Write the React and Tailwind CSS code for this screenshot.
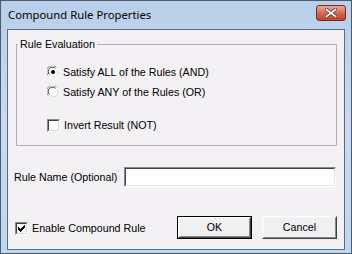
import React from "react";

function Radio({ checked }) {
  return (
    <svg width="12" height="12" viewBox="0 0 12 12" className="shrink-0">
      <circle cx="6" cy="6" r="5.5" fill="#ffffff" />
      <path d="M1.2 9.4 A5.5 5.5 0 0 1 9.4 1.2" stroke="#8a8a8a" strokeWidth="1" fill="none" />
      <path d="M2.4 8.4 A4.2 4.2 0 0 1 8.4 2.4" stroke="#404040" strokeWidth="1" fill="none" />
      <path d="M10.8 2.6 A5.5 5.5 0 0 1 2.6 10.8" stroke="#ffffff" strokeWidth="1" fill="none" />
      <path d="M9.6 3.6 A4.2 4.2 0 0 1 3.6 9.6" stroke="#d8d6d8" strokeWidth="1" fill="none" />
      {checked && <circle cx="6" cy="6" r="2" fill="#000000" />}
    </svg>
  );
}

function Check({ checked }) {
  return (
    <div className="w-[13px] h-[13px] shrink-0 border border-t-[#8a8a8a] border-l-[#8a8a8a] border-b-white border-r-white">
      <div className="w-full h-full bg-white border border-t-[#404040] border-l-[#404040] border-b-[#d8d6d8] border-r-[#d8d6d8] flex items-center justify-center">
        {checked && (
          <svg width="7" height="7" viewBox="0 0 7 7">
            <path d="M0 2h1v1h1v1h1v-1h1v-1h1v-1h1v-1h1v3h-1v1h-1v1h-1v1h-1v1h-1v-1h-1v-1h-1z" fill="#000" />
          </svg>
        )}
      </div>
    </div>
  );
}

function Button({ children, isDefault }) {
  return (
    <div className={"w-[75px] h-[23px] " + (isDefault ? "border border-[#000000]" : "")}>
      <div className="w-full h-full border border-t-white border-l-white border-b-[#404040] border-r-[#404040]">
        <div className="w-full h-full border border-t-[#f4f3f5] border-l-[#f4f3f5] border-b-[#8a8a8a] border-r-[#8a8a8a] bg-[#f0eff1] flex items-center justify-center text-black">
          {children}
        </div>
      </div>
    </div>
  );
}

export default function App() {
  return (
    <div
      className="w-[352px] h-[254px] border border-[#4c5a6c] bg-gradient-to-b from-[#b8cfea] via-[#c8dbf0] to-[#bcd8f0] flex flex-col"
      style={{ fontFamily: '"Liberation Sans", Arial, sans-serif' }}
    >
      <div className="h-[28px] flex items-start pl-[7px] pr-[5px]">
        <div className="flex-1 pt-[6px] text-[11.3px] leading-[16px] text-black" style={{ fontFamily: '"Noto Sans", "Liberation Sans", sans-serif' }}>
          Compound Rule Properties
        </div>
        <div className="mt-[4px] w-[30px] h-[16px] rounded-[3px] border border-[#7a2a22] bg-gradient-to-b from-[#e9a99a] via-[#d16a55] to-[#c0422c] flex items-center justify-center">
          <svg width="12" height="10" viewBox="0 0 12 10">
            <path d="M1.5 1.5 L10.5 8.5 M10.5 1.5 L1.5 8.5" stroke="#5a1e18" strokeWidth="3.2" strokeLinecap="square" />
            <path d="M1.5 1.5 L10.5 8.5 M10.5 1.5 L1.5 8.5" stroke="#ffffff" strokeWidth="1.8" strokeLinecap="square" />
          </svg>
        </div>
      </div>
      <div className="mx-[6px] mb-[3px] flex-1 border border-[#5e6d80] bg-[#f3f1f4] flex flex-col text-[10.7px] text-black">
        <fieldset className="ml-[8px] mt-[8px] w-[321px] border border-[#b2b0b4] pb-[12px]">
          <legend className="ml-[1px] px-[2px] leading-[13px]">Rule Evaluation</legend>
          <div className="pl-[30px]">
            <div className="mt-[13px] h-[16px] flex items-center gap-[4px]">
              <Radio checked />
              <span>Satisfy ALL of the Rules (AND)</span>
            </div>
            <div className="mt-[4px] h-[16px] flex items-center gap-[4px]">
              <Radio />
              <span>Satisfy ANY of the Rules (OR)</span>
            </div>
            <div className="mt-[17px] h-[16px] flex items-center gap-[4px]">
              <Check />
              <span>Invert Result (NOT)</span>
            </div>
          </div>
        </fieldset>
        <div className="mt-[21px] h-[20px] flex items-center pl-[6px]">
          <span className="w-[110px]">Rule Name (Optional)</span>
          <div className="w-[212px] h-[20px] border border-t-[#8a8a8a] border-l-[#8a8a8a] border-b-white border-r-white">
            <div className="w-full h-full bg-white border border-t-[#404040] border-l-[#404040] border-b-[#e4e2e5] border-r-[#e4e2e5]" />
          </div>
        </div>
        <div className="mt-[29px] flex items-center pl-[7px]">
          <div className="flex items-center gap-[4px] w-[162px] pt-[2px]">
            <Check checked />
            <span>Enable Compound Rule</span>
          </div>
          <Button isDefault>OK</Button>
          <div className="w-[10px]" />
          <Button>Cancel</Button>
        </div>
      </div>
    </div>
  );
}
